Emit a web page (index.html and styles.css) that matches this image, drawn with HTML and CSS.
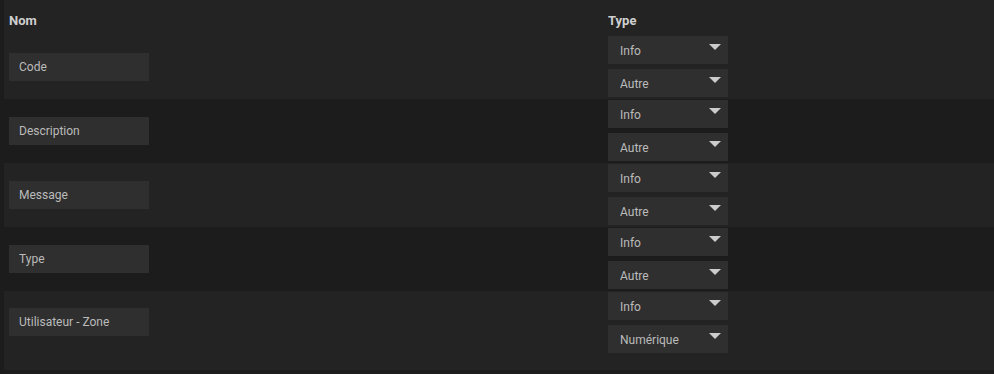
FILE: index.html
```html
<!DOCTYPE html>
<html lang="fr">
<head>
  <meta charset="UTF-8" />
  <title>Champs</title>
  <link rel="stylesheet" href="styles.css">
</head>
<body>
<div class="container">
  <table class="fields">
    <thead>
      <tr><th class="col-name">Nom</th><th>Type</th></tr>
    </thead>
    <tbody>
      <tr>
        <td><input type="text" class="name-input" value="Code"/></td>
        <td>
          <div class="select"><select><option>Info</option></select></div>
          <div class="select"><select><option>Autre</option></select></div>
        </td>
      </tr>
      <tr>
        <td><input type="text" class="name-input" value="Description"/></td>
        <td>
          <div class="select"><select><option>Info</option></select></div>
          <div class="select"><select><option>Autre</option></select></div>
        </td>
      </tr>
      <tr>
        <td><input type="text" class="name-input" value="Message"/></td>
        <td>
          <div class="select"><select><option>Info</option></select></div>
          <div class="select"><select><option>Autre</option></select></div>
        </td>
      </tr>
      <tr>
        <td><input type="text" class="name-input" value="Type"/></td>
        <td>
          <div class="select"><select><option>Info</option></select></div>
          <div class="select"><select><option>Autre</option></select></div>
        </td>
      </tr>
      <tr class="last">
        <td><input type="text" class="name-input" value="Utilisateur - Zone"/></td>
        <td>
          <div class="select"><select><option>Info</option></select></div>
          <div class="select"><select><option>Numérique</option></select></div>
        </td>
      </tr>
    </tbody>
  </table>
</div>
</body>
</html>
```

FILE: styles.css
```css
* { box-sizing: border-box; margin: 0; padding: 0; }
body {
  font-family: Roboto, "Liberation Sans", Arial, sans-serif;
  background: #1c1c1c;
  color: #bbb;
}

.container {
  margin-left: 4px;
  background: #232323;
}

.fields {
  width: 100%;
  border-collapse: collapse;
}

.fields th {
  height: 35px;
  padding: 5px 5px 0;
  text-align: left;
  font-size: 13px;
  font-weight: bold;
  color: #cfcfcf;
}

.fields .col-name {
  width: 599px;
}

.fields td {
  padding: 1px 5px 2px;
  vertical-align: middle;
}

.fields tbody tr:nth-child(even) {
  background: #1c1c1c;
}

.fields tr.last td {
  padding-bottom: 17px;
}

.fields tr.last td:first-child {
  vertical-align: top;
  padding-top: 17px;
}

.name-input {
  display: block;
  width: 140px;
  height: 28px;
  padding: 0 10px;
  border: none;
  outline: none;
  background: #2f2f2f;
  color: #bbb;
  font-family: inherit;
  font-size: 12px;
}

.select {
  position: relative;
  width: 120px;
  height: 28px;
}

.select + .select {
  margin-top: 5px;
}

.select select {
  appearance: none;
  -webkit-appearance: none;
  display: block;
  width: 100%;
  height: 100%;
  padding: 2px 24px 0 12px;
  border: none;
  outline: none;
  background: #2f2f2f;
  color: #bbb;
  font-family: inherit;
  font-size: 12px;
}

.select::after {
  content: "";
  position: absolute;
  top: 8px;
  right: 7px;
  border-left: 6px solid transparent;
  border-right: 6px solid transparent;
  border-top: 6px solid #ccc;
  pointer-events: none;
}
```
